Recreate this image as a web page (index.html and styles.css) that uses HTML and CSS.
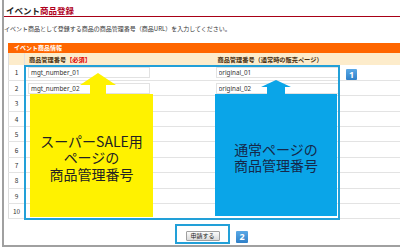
FILE: index.html
```html
<!DOCTYPE html>
<html>
	<head>
		<meta charset="utf-8">
		<title>イベント商品登録</title>
		<link rel="stylesheet" href="styles.css">
	</head>
	<body>
		<div class="page">
			<h1 class="title">イベント<span class="title-red">商品登録</span></h1>
			<p class="lead">イベント商品として登録する商品の商品管理番号（商品URL）を入力してください。</p>

			<div class="panel">
				<div class="panel-head">イベント商品情報</div>
				<table class="items">
					<tr>
						<th class="no"></th>
						<th class="col-sale">商品管理番号<span class="req">【必須】</span></th>
						<th class="col-orig">商品管理番号（通常時の販売ページ）</th>
					</tr>
					<tr><td class="no">1</td><td><input class="field" value="mgt_number_01"></td><td><input class="field field-r" value="original_01"></td></tr>
					<tr><td class="no">2</td><td><input class="field" value="mgt_number_02"></td><td><input class="field field-r" value="original_02"></td></tr>
					<tr><td class="no">3</td><td></td><td></td></tr>
					<tr><td class="no">4</td><td></td><td></td></tr>
					<tr><td class="no">5</td><td></td><td></td></tr>
					<tr><td class="no">6</td><td></td><td></td></tr>
					<tr><td class="no">7</td><td></td><td></td></tr>
					<tr><td class="no">8</td><td></td><td></td></tr>
					<tr><td class="no">9</td><td></td><td></td></tr>
					<tr><td class="no">10</td><td></td><td></td></tr>
				</table>

				<!-- 説明用の吹き出し -->
				<div class="hl-frame"></div>

				<div class="callout callout-sale">
					<svg class="arrow" width="123" height="21" viewBox="0 0 123 21">
						<polygon points="68,0 86,12 76,12 76,21 60,21 60,12 50,12" fill="#fff200"/>
					</svg>
					<div class="callout-box box-yellow">スーパーSALE用<br>ページの<br>商品管理番号</div>
				</div>

				<div class="callout callout-orig">
					<svg class="arrow" width="122" height="14" viewBox="0 0 122 14">
						<polygon points="61,0 76,7 70,7 70,14 52,14 52,7 46,7" fill="#0aa5e8"/>
					</svg>
					<div class="callout-box box-blue">通常ページの<br>商品管理番号</div>
				</div>

				<span class="badge badge-1">1</span>
			</div>

			<div class="submit">
				<div class="btn-frame">
					<button class="btn">申請する</button>
				</div>
				<span class="badge badge-2">2</span>
			</div>
		</div>
	</body>
</html>
```

FILE: styles.css
```css
body{
	margin:0;
	font-family:"Noto Sans CJK JP","Noto Sans",sans-serif;
	color:#333;
	background:#fff;
}

.page{
	position:relative;
	margin-left:2px;
	height:245px;
	border-left:2px solid #a0a0a0;
	border-bottom:2px solid #a0a0a0;
	overflow:hidden;
}

.title{
	margin:0;
	padding:5px 0 1px 2px;
	font-size:8.5px;
	line-height:10px;
	font-weight:bold;
	color:#222;
	border-bottom:1px solid #a80016;
}

.title-red{
	color:#b0001c;
}

.lead{
	margin:8px 0 0 0;
	font-size:6px;
	line-height:8px;
	color:#333;
	white-space:nowrap;
}

.panel{
	position:relative;
	margin:10px 0 0 4px;
}

.panel-head{
	height:10px;
	line-height:10px;
	padding-left:6px;
	background-color:#ff6600;
	color:#fff;
	font-size:6px;
	font-weight:bold;
}

.items{
	width:100%;
	border-spacing:0;
	border-collapse:collapse;
	border-left:1px solid #dcdcdc;
	table-layout:fixed;
}

.items th{
	height:12px;
	padding:0;
	background-color:#fdeccb;
	font-size:6.2px;
	font-weight:bold;
	color:#4a3010;
	text-align:left;
	white-space:nowrap;
}

.items td{
	height:15.4px;
	padding:0;
	border-bottom:1px solid #e3e3e3;
	box-sizing:border-box;
}

.items .no{
	width:15px;
	text-align:center;
	font-size:6.5px;
	color:#333;
	border-right:1px solid #e0e0e0;
}

.col-sale{
	width:188px;
	padding-left:4px !important;
	box-sizing:border-box;
}

.col-orig{
	padding-left:5px !important;
}

.req{
	color:#e00000;
}

.field{
	display:block;
	width:122px;
	height:11px;
	margin-left:3px;
	padding:0 2px;
	box-sizing:border-box;
	border:1px solid #e2e2e2;
	background:#fff;
	font-family:"Noto Sans",sans-serif;
	font-size:6.3px;
	color:#333;
}

.field-r{
	width:123px;
}

/* 青い囲み枠 */
.hl-frame{
	position:absolute;
	left:16px;
	top:22px;
	width:316px;
	height:155px;
	box-sizing:border-box;
	border:2px solid #22a0d8;
}

.callout{
	position:absolute;
	display:flex;
	flex-direction:column;
}

.callout .arrow{
	display:block;
}

.callout-sale{
	left:22px;
	top:30px;
}

.callout-orig{
	left:207px;
	top:37px;
}

.callout-box{
	display:flex;
	align-items:center;
	justify-content:center;
	text-align:center;
	padding-top:4px;
	box-sizing:border-box;
	font-size:14px;
	line-height:16.5px;
}

.box-yellow{
	width:123px;
	height:123px;
	background-color:#fff200;
	color:#222;
}

.box-blue{
	width:122px;
	height:122px;
	background-color:#0aa5e8;
	color:#15284a;
}

.badge{
	display:inline-block;
	width:11px;
	height:11px;
	line-height:11px;
	text-align:center;
	background:linear-gradient(#5aa9e6,#2f80c8);
	color:#fff;
	font-family:"Noto Sans",sans-serif;
	font-size:9px;
	font-weight:bold;
	border-radius:1px;
}

.badge-1{
	position:absolute;
	left:338px;
	top:26px;
}

.submit{
	display:flex;
	align-items:flex-start;
	gap:6px;
	margin:5px 0 0 171px;
}

.btn-frame{
	display:flex;
	align-items:center;
	justify-content:center;
	width:55px;
	height:20px;
	box-sizing:border-box;
	border:2px solid #22a0d8;
	padding-top:3px;
}

.btn{
	height:10px;
	width:34px;
	padding:0;
	border:1px solid #a0a0a0;
	border-radius:1px;
	background:linear-gradient(#fbfbfb,#dadada);
	font-family:"Noto Sans CJK JP",sans-serif;
	font-size:6px;
	line-height:8px;
	color:#222;
}

.badge-2{
	width:12px;
	height:12px;
	line-height:12px;
	margin-top:7px;
}
```
